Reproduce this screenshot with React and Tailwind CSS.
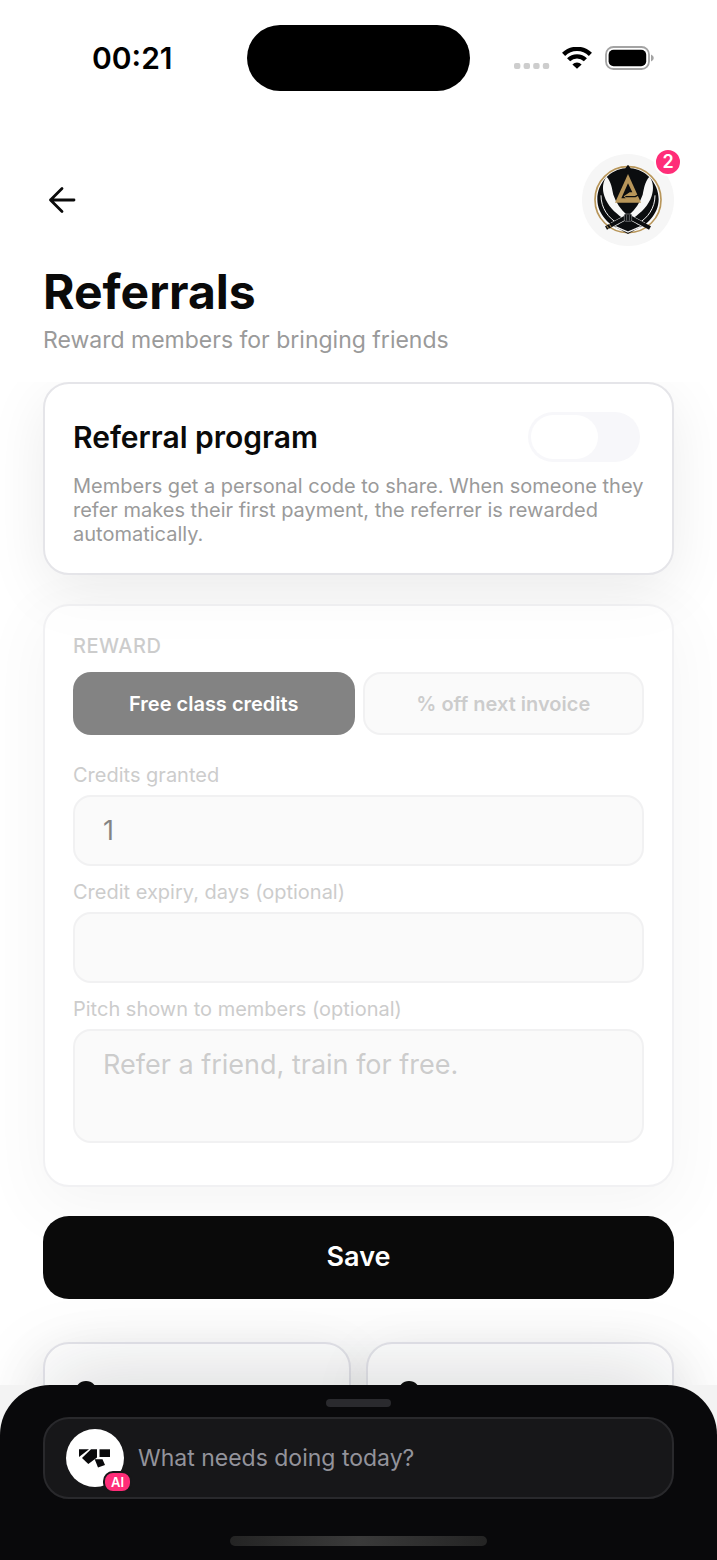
import React from "react";

const fieldClass =
  "block w-full rounded-[18px] border-2 border-[#e5e5e7] bg-[#f7f7f7] px-7 text-[27px] text-[#0a0a0a] placeholder:text-[#9a9a9a] outline-none";

function StatusBar() {
  return (
    <div className="grid grid-cols-[1fr_auto_1fr] items-center pt-[25px]">
      <span className="pl-[92px] text-[30px] leading-9 font-semibold text-black">00:21</span>
      <div className="h-[66px] w-[223px] rounded-full bg-black" />
      <div className="flex items-center gap-3 pl-11">
        <svg className="h-6 w-9" viewBox="0 0 36 24" fill="#cdcdcd" aria-hidden="true">
          <rect x="0" y="17" width="6.4" height="6" rx="2" />
          <rect x="9.6" y="17" width="6.4" height="6" rx="2" />
          <rect x="19.2" y="17" width="6.4" height="6" rx="2" />
          <rect x="28.8" y="17" width="6.4" height="6" rx="2" />
        </svg>
        <svg className="h-[22px] w-[30px]" viewBox="0 0 30 22" aria-hidden="true">
          <path d="M1.6 7.4 A19 19 0 0 1 28.4 7.4" fill="none" stroke="#000" strokeWidth="4.4" />
          <path d="M6.6 12.8 A12 12 0 0 1 23.4 12.8" fill="none" stroke="#000" strokeWidth="4.4" />
          <path d="M15 21.8 L10.4 17.4 A6.6 6.6 0 0 1 19.6 17.4 Z" fill="#000" />
        </svg>
        <svg className="h-6 w-[50px]" viewBox="0 0 50 24" aria-hidden="true">
          <rect x="2" y="1" width="43" height="22" rx="7.5" fill="none" stroke="#a3a3a3" strokeWidth="1.8" />
          <rect x="4.6" y="3.8" width="37.6" height="16.4" rx="5" fill="#000" />
          <path d="M47 8.5 Q49.8 9.5 49.8 12 Q49.8 14.5 47 15.5 Z" fill="#a3a3a3" />
        </svg>
      </div>
    </div>
  );
}

function Crest() {
  return (
    <svg className="size-[76px]" viewBox="0 0 228 228" aria-hidden="true">
      <circle cx="114" cy="113" r="99" fill="#fafafa" stroke="#b8965a" strokeWidth="5" />
      <path
        d="M114 8 L122 19 C166 22 206 62 206 112 C206 158 168 192 136 203 L114 216 L92 203 C60 192 22 158 22 112 C22 62 62 22 106 19 Z"
        fill="#0b0d0f"
      />
      <path d="M33 100 C33 138 54 168 86 186" fill="none" stroke="#f5f5f5" strokeWidth="3" />
      <path d="M195 100 C195 138 174 168 142 186" fill="none" stroke="#f5f5f5" strokeWidth="3" />
      <path d="M76 194 L114 210 L152 194" fill="none" stroke="#f5f5f5" strokeWidth="4" />
      <path
        d="M50 44 C38 58 36 80 43 102 C52 130 74 152 98 168 L110 158 C92 142 78 122 70 98 C66 80 64 60 50 44 Z"
        fill="#f7f7f7"
      />
      <path
        d="M178 44 C190 58 192 80 185 102 C176 130 154 152 130 168 L118 158 C136 142 150 122 158 98 C162 80 164 60 178 44 Z"
        fill="#f7f7f7"
      />
      <path d="M112 164 L66 189" stroke="#f5f5f5" strokeWidth="15" />
      <path d="M116 164 L162 189" stroke="#f5f5f5" strokeWidth="15" />
      <path d="M108 166 L48 198" stroke="#0b0d0f" strokeWidth="12" />
      <path d="M120 166 L180 198" stroke="#0b0d0f" strokeWidth="12" />
      <path d="M50 191 L56 200 M58 187 L64 196" stroke="#b8965a" strokeWidth="3" />
      <rect x="103" y="156" width="22" height="22" rx="4" fill="#0b0d0f" stroke="#8b8d90" strokeWidth="2" />
      <path d="M110 158 V176 M118 158 V176" stroke="#8b8d90" strokeWidth="2" />
      <path d="M114 36 L153 122 H75 Z" fill="#b8965a" />
      <path d="M114 64 L127 91 H119 L101 103 L107 109 H94 Z" fill="#0b0d0f" />
      <path d="M106 104 H136 L146 98" fill="none" stroke="#0b0d0f" strokeWidth="4" />
    </svg>
  );
}

function Header() {
  return (
    <header className="px-[43px] pt-[63px] pb-[26px]">
      <div className="flex items-center justify-between">
        <button type="button" aria-label="Back" className="flex size-10 items-center justify-center">
          <svg className="size-10" viewBox="0 0 40 40" fill="none" stroke="#0a0a0a" strokeWidth="2.8" strokeLinecap="round" strokeLinejoin="round" aria-hidden="true">
            <path d="M31 20 H7.5 M19 8.5 L7.5 20 L19 31.5" />
          </svg>
        </button>
        <button type="button" aria-label="Profile, 2 notifications" className="relative flex size-[92px] items-center justify-center rounded-full bg-[#f6f6f6]">
          <Crest />
          <span className="absolute -top-1.5 -right-2 flex size-7 items-center justify-center rounded-full border-2 border-white bg-[#ff2d78] text-[18px] leading-none font-semibold text-white">
            2
          </span>
        </button>
      </div>
      <h1 className="mt-4 text-[48px] leading-[60px] font-bold text-[#0a0a0a]">Referrals</h1>
      <p className="mt-0.5 text-[23px] leading-8 text-[#9a9a9a]">Reward members for bringing friends</p>
    </header>
  );
}

function Field({ id, label, children }) {
  return (
    <div className="mb-3.5">
      <label htmlFor={id} className="mb-2 block text-[20px] leading-6 text-[#9a9a9a]">
        {label}
      </label>
      {children}
    </div>
  );
}

function StatCard() {
  return (
    <div className="h-[200px] rounded-[26px] border-2 border-[#e5e5eb] bg-white px-[30px] pt-[37px] shadow-[0_16px_60px_rgba(0,0,0,0.08)]">
      <div className="size-[22px] rounded-full bg-[#0a0a0a]" />
    </div>
  );
}

function PromptSheet() {
  return (
    <footer className="relative bg-[#f3f3f3] shadow-[0_-60px_80px_-48px_rgba(16,24,32,0.17)]">
      <div className="rounded-t-[50px] bg-[#09090b] px-[43px] pt-3.5 pb-3.5">
        <div className="mx-auto h-2 w-[65px] rounded-full bg-[#2a2a2e]" />
        <label className="mt-2.5 flex h-[82px] items-center gap-3.5 rounded-[26px] border-2 border-[#29292c] bg-[#171719] px-[21px]">
          <span className="relative size-[58px] shrink-0 rounded-full bg-white">
            <svg className="size-[58px]" viewBox="0 0 58 58" fill="#09090b" aria-hidden="true">
              <path d="M13 20.3 H23 L13 28 Z" />
              <path d="M25 20.3 H31 V28.5 L22.3 35 L16 29 Z" />
              <path d="M33.5 20.3 H44 V28 H33.5 Z" />
              <path d="M28.7 30.3 H36.5 L39 36 L32 38.6 Z" />
            </svg>
            <span className="absolute -right-2 -bottom-1.5 rounded-[10px] border-2 border-[#171719] bg-[#ff2d78] px-1.5 text-[13px] leading-[18px] font-semibold text-white">
              AI
            </span>
          </span>
          <input
            type="text"
            aria-label="Ask the assistant"
            placeholder="What needs doing today?"
            className="min-w-0 flex-1 bg-transparent text-[23px] text-white outline-none placeholder:text-[#93939b]"
          />
        </label>
        <div className="mx-auto mt-[37px] h-2.5 w-[257px] rounded-full bg-linear-to-r from-[#242424] via-[#3a3a3a] to-[#242424]" />
      </div>
    </footer>
  );
}

export default function App() {
  return (
    <div className="flex h-screen flex-col overflow-hidden bg-white font-['Inter','Liberation_Sans',sans-serif]">
      <StatusBar />
      <Header />
      <main className="flex min-h-0 flex-1 flex-col gap-[29px] overflow-hidden px-[43px]">
        <section className="shrink-0 rounded-[26px] border-2 border-[#e5e5e9] bg-white px-7 pt-7 pb-[27px] shadow-[0_16px_60px_rgba(0,0,0,0.08)]">
          <div className="flex items-center justify-between pr-1">
            <label htmlFor="program" className="text-[30px] leading-9 font-semibold text-[#0a0a0a]">
              Referral program
            </label>
            <input
              id="program"
              type="checkbox"
              role="switch"
              className="h-[50px] w-28 appearance-none rounded-full bg-[#f7f7fa] p-[3px] before:block before:h-11 before:w-[67px] before:rounded-full before:bg-white before:content-[''] checked:bg-green-500 checked:before:ml-auto"
            />
          </div>
          <p className="mt-3 text-[20px] leading-6 text-[#9a9a9a]">
            Members get a personal code to share. When someone they refer makes their first payment, the referrer is
            rewarded automatically.
          </p>
        </section>

        <section className="relative shrink-0 rounded-[26px] border-2 border-[#e5e5e9] bg-white px-7 pt-7 pb-7 opacity-50 shadow-[0_16px_60px_rgba(0,0,0,0.08)]">
          <h2 className="text-[20px] leading-6 font-medium tracking-wide text-[#9a9a9a]">REWARD</h2>
          <div className="mt-3.5 mb-7 grid grid-cols-2 gap-2">
            <button type="button" className="h-[63px] rounded-[18px] bg-[#0a0a0a] text-[20px] font-semibold text-white">
              Free class credits
            </button>
            <button type="button" className="h-[63px] rounded-[18px] border-2 border-[#e5e5e7] bg-[#f7f7f7] text-[20px] font-semibold text-[#9a9a9a]">
              % off next invoice
            </button>
          </div>
          <Field id="credits" label="Credits granted">
            <input id="credits" type="text" inputMode="numeric" defaultValue="1" className={`h-[71px] ${fieldClass}`} />
          </Field>
          <Field id="expiry" label="Credit expiry, days (optional)">
            <input id="expiry" type="text" inputMode="numeric" className={`h-[71px] ${fieldClass}`} />
          </Field>
          <Field id="pitch" label="Pitch shown to members (optional)">
            <textarea id="pitch" placeholder="Refer a friend, train for free." className={`h-[114px] resize-none pt-[18px] leading-8 ${fieldClass}`} />
          </Field>
        </section>

        <button type="button" className="relative h-[83px] shrink-0 rounded-[26px] bg-[#0a0a0a] text-[27px] font-semibold text-white">
          Save
        </button>

        <div className="mt-3.5 grid shrink-0 grid-cols-2 gap-[15px]">
          <StatCard />
          <StatCard />
        </div>
      </main>
      <PromptSheet />
    </div>
  );
}
